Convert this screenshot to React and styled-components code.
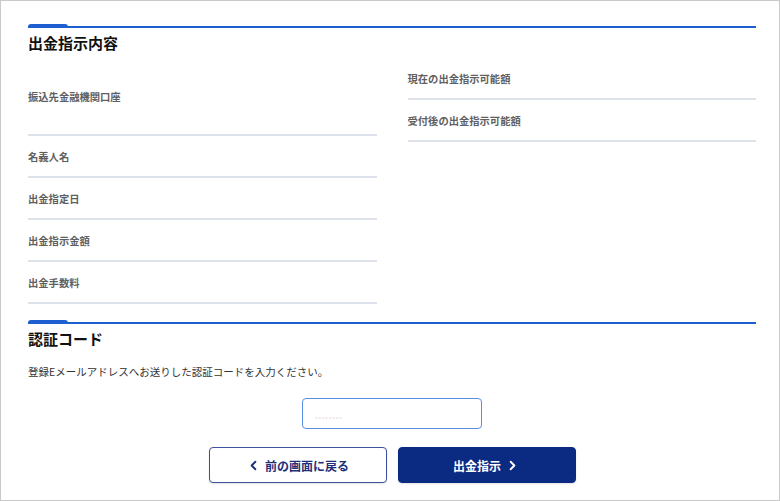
import React from "react";
import styled, { createGlobalStyle } from "styled-components";
import { ChevronLeft, ChevronRight } from "lucide-react";

const GlobalStyle = createGlobalStyle`
  html, body {
    margin: 0;
    padding: 0;
    background: #fff;
  }
  body {
    font-family: "Noto Sans CJK JP", "Noto Sans", "Liberation Sans", sans-serif;
    color: #222;
  }
  * {
    box-sizing: border-box;
  }
`;

const leftRows = [
  { label: "振込先金融機関口座", tall: true },
  { label: "名義人名" },
  { label: "出金指定日" },
  { label: "出金指示金額" },
  { label: "出金手数料" },
];

const rightRows = [{ label: "現在の出金指示可能額" }, { label: "受付後の出金指示可能額" }];

function App() {
  return (
    <>
      <GlobalStyle />
      <Frame>
        <SectionBar />
        <SectionTitle>出金指示内容</SectionTitle>
        <DetailGrid>
          <Column>
            {leftRows.map((row) => (
              <Row key={row.label} $tall={row.tall}>
                <Label>{row.label}</Label>
              </Row>
            ))}
          </Column>
          <Column>
            {rightRows.map((row) => (
              <Row key={row.label}>
                <Label>{row.label}</Label>
              </Row>
            ))}
          </Column>
        </DetailGrid>

        <SectionBar $gap={16} />
        <SectionTitle>認証コード</SectionTitle>
        <Description>登録Eメールアドレスへお送りした認証コードを入力ください。</Description>
        <CodeRow>
          <CodeInput type="text" placeholder="••••••••" />
        </CodeRow>
        <ButtonRow>
          <Button type="button">
            <ChevronLeft size={15} strokeWidth={3} />
            前の画面に戻る
          </Button>
          <Button type="button" $primary>
            出金指示
            <ChevronRight size={15} strokeWidth={3} />
          </Button>
        </ButtonRow>
      </Frame>
    </>
  );
}

const Frame = styled.div`
  width: 780px;
  height: 501px;
  border: 1px solid #c9c9c9;
  padding: 23px 23px 0 27px;
  display: flex;
  flex-direction: column;
  overflow: hidden;
`;

const SectionBar = styled.div`
  position: relative;
  height: 4px;
  margin-top: ${(p) => p.$gap || 0}px;
  border-bottom: 2px solid #1d5fd0;

  &::before {
    content: "";
    position: absolute;
    left: 0;
    top: 0;
    width: 40px;
    height: 4px;
    background: #1d5fd0;
    border-radius: 3px 3px 0 0;
  }
`;

const SectionTitle = styled.h2`
  margin: 5px 0 0;
  font-size: 15px;
  line-height: 20px;
  font-weight: 700;
  color: #111;
`;

const DetailGrid = styled.div`
  display: grid;
  grid-template-columns: 1fr 1fr;
  column-gap: 31px;
  margin-top: 5px;
  align-items: start;
`;

const Column = styled.div`
  display: flex;
  flex-direction: column;
`;

const Row = styled.div`
  height: ${(p) => (p.$tall ? 78 : 42)}px;
  display: flex;
  align-items: center;
  border-bottom: 2px solid #dde2ea;
`;

const Label = styled.span`
  font-size: 10.3px;
  font-weight: 700;
  color: #5f5f5f;
`;

const Description = styled.p`
  margin: 15px 0 0;
  font-size: 10.5px;
  line-height: 16px;
  color: #333;
`;

const CodeRow = styled.div`
  display: flex;
  justify-content: center;
  margin-top: 18px;
`;

const CodeInput = styled.input`
  width: 180px;
  height: 31px;
  border: 1.5px solid #5a8fe3;
  border-radius: 4px;
  padding: 8px 12px 0;
  font-size: 7px;
  letter-spacing: 1px;
  outline: none;
  background: #fff;

  &::placeholder {
    color: #eee3e4;
  }
`;

const ButtonRow = styled.div`
  display: flex;
  justify-content: center;
  gap: 11px;
  margin-top: 18px;
`;

const Button = styled.button`
  width: 178px;
  height: 36px;
  display: flex;
  align-items: center;
  justify-content: center;
  gap: 4px;
  border-radius: 4px;
  font-family: inherit;
  font-size: 12px;
  font-weight: 700;
  cursor: pointer;
  border: 1.5px solid ${(p) => (p.$primary ? "#0b2a82" : "#3d519c")};
  background: ${(p) => (p.$primary ? "#0b2a82" : "#fff")};
  color: ${(p) => (p.$primary ? "#fff" : "#1c2f78")};
  box-shadow: 0 1px 2px rgba(0, 0, 0, 0.12);

  svg {
    flex-shrink: 0;
  }
`;

export default App;
